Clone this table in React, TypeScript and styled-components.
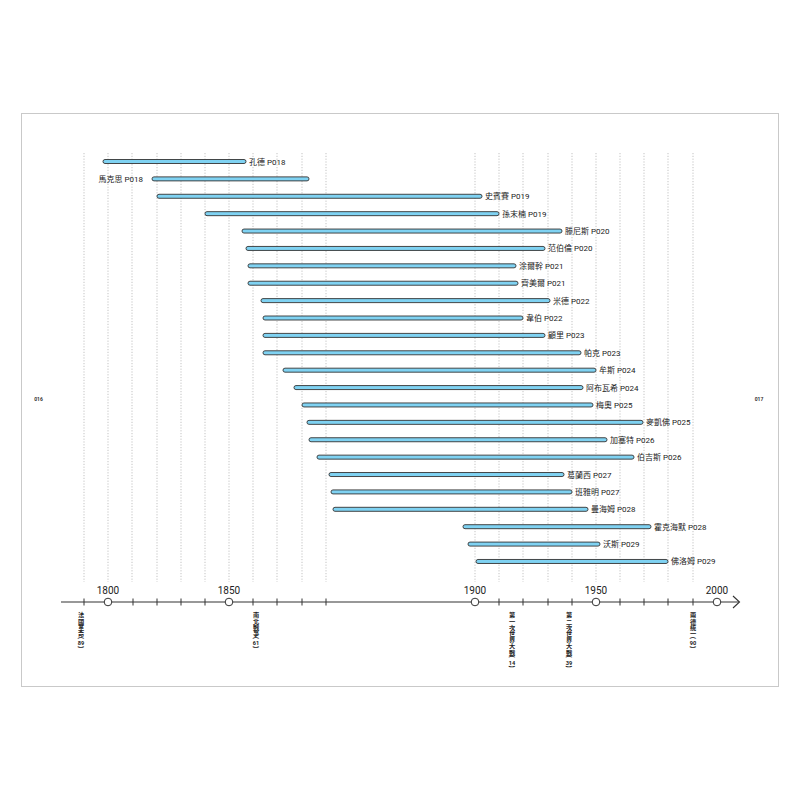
import React from 'react';
import styled, { createGlobalStyle } from 'styled-components';

const GlobalStyle = createGlobalStyle`
  html, body {
    margin: 0;
    padding: 0;
    background: #ffffff;
  }
  body {
    font-family: "Liberation Sans", "Noto Sans CJK TC", sans-serif;
  }
`;

const Page = styled.div`
  width: 800px;
  height: 800px;
  padding-top: 113px;
  padding-left: 21px;
  box-sizing: border-box;
`;

const Frame = styled.div`
  width: 758px;
  height: 574px;
  box-sizing: border-box;
  border: 1px solid #c9c9c9;
  display: grid;
  grid-template-columns: 32px 692px 32px;
  align-items: center;
`;

const PageNum = styled.div<{ side: 'left' | 'right' }>`
  font-family: "Roboto", "Liberation Sans", sans-serif;
  font-size: 5px;
  font-weight: 700;
  color: #333;
  text-align: center;
  padding-right: ${p => (p.side === 'right' ? '6px' : '0')};
  padding-left: ${p => (p.side === 'left' ? '1px' : '0')};
  margin-top: -3px;
`;

const Chart = styled.svg`
  display: block;
  width: 692px;
  height: 572px;

  .name {
    font-family: "Roboto", "Noto Sans CJK TC", sans-serif;
    font-size: 8px;
    fill: #222;
  }
  .year {
    font-family: "Roboto", "Liberation Sans", sans-serif;
    font-size: 10px;
    fill: #222;
  }
  .event {
    font-family: "Noto Sans CJK TC", sans-serif;
    font-size: 6.2px;
    font-weight: 700;
    fill: #222;
    writing-mode: vertical-rl;
  }
  .event-num {
    font-family: "Roboto", sans-serif;
    font-size: 5.6px;
    font-weight: 700;
    fill: #222;
  }
`;

type Person = { name: string; page: string; start: number; end: number; left?: boolean };

const people: Person[] = [
  { name: '孔德', page: 'P018', start: 103, end: 246 },
  { name: '馬克思', page: 'P018', start: 152, end: 309, left: true },
  { name: '史賓賽', page: 'P019', start: 157, end: 482 },
  { name: '孫末楠', page: 'P019', start: 205, end: 499 },
  { name: '滕尼斯', page: 'P020', start: 242, end: 562 },
  { name: '范伯倫', page: 'P020', start: 246, end: 545 },
  { name: '涂爾幹', page: 'P021', start: 248, end: 516 },
  { name: '齊美爾', page: 'P021', start: 248, end: 518 },
  { name: '米德', page: 'P022', start: 261, end: 550 },
  { name: '韋伯', page: 'P022', start: 263, end: 523 },
  { name: '顧里', page: 'P023', start: 263, end: 545 },
  { name: '帕克', page: 'P023', start: 263, end: 581 },
  { name: '牟斯', page: 'P024', start: 283, end: 596 },
  { name: '阿布瓦希', page: 'P024', start: 294, end: 583 },
  { name: '梅奧', page: 'P025', start: 302, end: 593 },
  { name: '麥凱佛', page: 'P025', start: 307, end: 643 },
  { name: '加塞特', page: 'P026', start: 309, end: 607 },
  { name: '伯吉斯', page: 'P026', start: 317, end: 634 },
  { name: '葛蘭西', page: 'P027', start: 329, end: 564 },
  { name: '班雅明', page: 'P027', start: 331, end: 572 },
  { name: '曼海姆', page: 'P028', start: 333, end: 588 },
  { name: '霍克海默', page: 'P028', start: 463, end: 651 },
  { name: '沃斯', page: 'P029', start: 468, end: 600 },
  { name: '佛洛姆', page: 'P029', start: 476, end: 668 },
];

const gridLines = [84, 108, 132, 157, 181, 205, 229, 253, 277, 302, 326, 475, 499, 523, 548, 572, 596, 620, 644, 668, 693];
const ticks = [84, 133, 157, 181, 205, 253, 277, 302, 326, 499, 523, 548, 572, 620, 644, 668, 693];
const years = [
  { x: 108, label: '1800' },
  { x: 229, label: '1850' },
  { x: 475, label: '1900' },
  { x: 596, label: '1950' },
  { x: 717, label: '2000' },
];
const events = [
  { x: 81, name: '法國革命', num: '89' },
  { x: 256, name: '南北戰爭', num: '61' },
  { x: 512, name: '第一次世界大戰', num: '14' },
  { x: 569, name: '第二次世界大戰', num: '39' },
  { x: 693, name: '兩德統一', num: '90' },
];

const AXIS_Y = 602;
const ROW_TOP = 161.5;
const ROW_STEP = 17.39;
const EVENT_TOP = 612;
const CHAR = 6.5;

const Bar = ({ p, y }: { p: Person; y: number }) => (
  <g>
    <rect
      x={p.start}
      y={y - 2}
      width={p.end - p.start}
      height={4}
      rx={2}
      fill="#7fd2f2"
      stroke="#333"
      strokeWidth={0.9}
    />
    {p.left ? (
      <text className="name" x={p.start - 9} y={y + 3} textAnchor="end">
        {p.name} {p.page}
      </text>
    ) : (
      <text className="name" x={p.end + 3} y={y + 3}>
        {p.name} {p.page}
      </text>
    )}
  </g>
);

const EventLabel = ({ x, name, num }: { x: number; name: string; num: string }) => {
  const parenY = EVENT_TOP + name.length * CHAR;
  return (
    <g>
      <text className="event" x={x} y={EVENT_TOP}>
        {name}(
      </text>
      <text className="event-num" x={x} y={parenY + 7.2} textAnchor="middle">
        {num}
      </text>
      <text className="event" x={x} y={parenY + 8}>
        )
      </text>
    </g>
  );
};

export default function App() {
  return (
    <>
      <GlobalStyle />
      <Page>
        <Frame>
          <PageNum side="left">016</PageNum>
          <Chart viewBox="54 114 692 572">
            {gridLines.map(x => (
              <line
                key={x}
                x1={x}
                x2={x}
                y1={153}
                y2={582}
                stroke="#9a9a9a"
                strokeWidth={0.6}
                strokeDasharray="1.2 1.6"
              />
            ))}
            {people.map((p, i) => (
              <Bar key={p.name} p={p} y={ROW_TOP + i * ROW_STEP} />
            ))}
            <line x1={61} x2={739} y1={AXIS_Y} y2={AXIS_Y} stroke="#333" strokeWidth={1.1} />
            <polyline
              points={`733,${AXIS_Y - 6} 739.5,${AXIS_Y} 733,${AXIS_Y + 6}`}
              fill="none"
              stroke="#333"
              strokeWidth={1.1}
            />
            {ticks.map(x => (
              <line key={x} x1={x} x2={x} y1={AXIS_Y - 3.5} y2={AXIS_Y + 3.5} stroke="#333" strokeWidth={1} />
            ))}
            {years.map(y => (
              <g key={y.label}>
                <circle cx={y.x} cy={AXIS_Y} r={3.8} fill="#fff" stroke="#333" strokeWidth={1} />
                <text className="year" x={y.x} y={594} textAnchor="middle">
                  {y.label}
                </text>
              </g>
            ))}
            {events.map(e => (
              <EventLabel key={e.name} {...e} />
            ))}
          </Chart>
          <PageNum side="right">017</PageNum>
        </Frame>
      </Page>
    </>
  );
}
